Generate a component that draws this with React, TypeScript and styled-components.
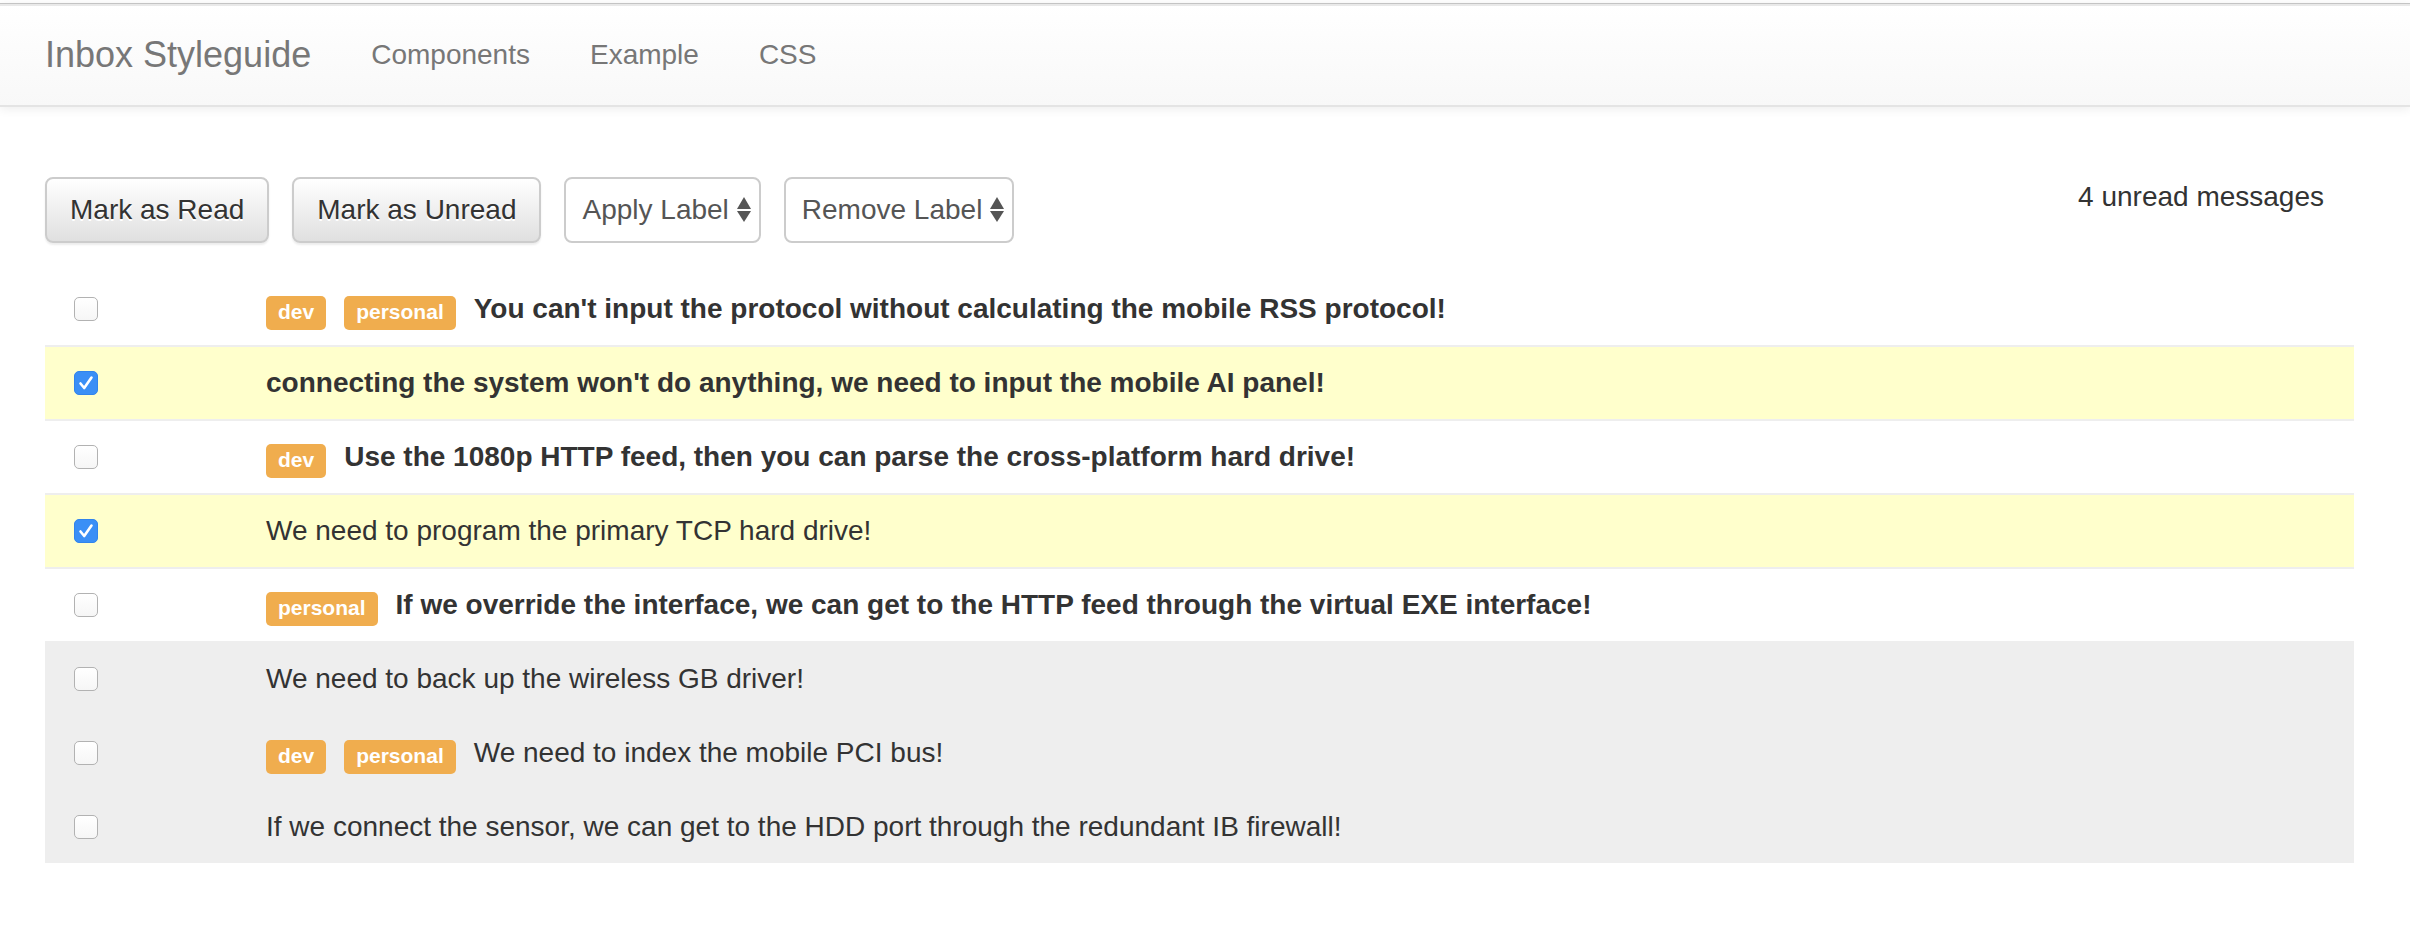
import React from 'react';
import styled, { createGlobalStyle } from 'styled-components';

interface Message {
  id: number;
  text: string;
  labels: string[];
  read: boolean;
  selected: boolean;
}

const messages: Message[] = [
  { id: 1, text: "You can't input the protocol without calculating the mobile RSS protocol!", labels: ['dev', 'personal'], read: false, selected: false },
  { id: 2, text: "connecting the system won't do anything, we need to input the mobile AI panel!", labels: [], read: false, selected: true },
  { id: 3, text: 'Use the 1080p HTTP feed, then you can parse the cross-platform hard drive!', labels: ['dev'], read: false, selected: false },
  { id: 4, text: 'We need to program the primary TCP hard drive!', labels: [], read: true, selected: true },
  { id: 5, text: 'If we override the interface, we can get to the HTTP feed through the virtual EXE interface!', labels: ['personal'], read: false, selected: false },
  { id: 6, text: 'We need to back up the wireless GB driver!', labels: [], read: true, selected: false },
  { id: 7, text: 'We need to index the mobile PCI bus!', labels: ['dev', 'personal'], read: true, selected: false },
  { id: 8, text: 'If we connect the sensor, we can get to the HDD port through the redundant IB firewall!', labels: [], read: true, selected: false },
];

const GlobalStyle = createGlobalStyle`
  html, body {
    margin: 0;
    padding: 0;
    background: #fff;
  }
  body {
    font-family: "Liberation Sans", Helvetica, Arial, sans-serif;
    font-size: 28px;
    line-height: 40px;
    color: #333;
  }
  * {
    box-sizing: border-box;
  }
`;

const App: React.FC = () => {
  const unread = messages.filter((m) => !m.read).length;

  return (
    <StyledPage>
      <GlobalStyle />
      <StyledNavbar>
        <StyledBrand>Inbox Styleguide</StyledBrand>
        <StyledNavLink>Components</StyledNavLink>
        <StyledNavLink>Example</StyledNavLink>
        <StyledNavLink>CSS</StyledNavLink>
      </StyledNavbar>

      <StyledMain>
        <StyledToolbar>
          <StyledButton>Mark as Read</StyledButton>
          <StyledButton>Mark as Unread</StyledButton>
          <LabelSelect text="Apply Label" />
          <LabelSelect text="Remove Label" />
          <StyledUnreadCount>{unread} unread messages</StyledUnreadCount>
        </StyledToolbar>

        <StyledTable>
          {messages.map((message) => (
            <MessageRow key={message.id} message={message} />
          ))}
        </StyledTable>
      </StyledMain>
    </StyledPage>
  );
};

const LabelSelect: React.FC<{ text: string }> = ({ text }) => (
  <StyledSelect>
    <span>{text}</span>
    <svg width="14" height="26" viewBox="0 0 14 26">
      <path d="M7 0 L14 12 L0 12 Z" fill="#555" />
      <path d="M0 14 L14 14 L7 25 Z" fill="#555" />
    </svg>
  </StyledSelect>
);

const MessageRow: React.FC<{ message: Message }> = ({ message }) => (
  <StyledRow $read={message.read} $selected={message.selected}>
    <StyledCheckCell>
      <StyledCheckbox $checked={message.selected}>
        {message.selected && (
          <svg width="24" height="24" viewBox="0 0 24 24">
            <path
              d="M6.5 12.5 L10.2 17 L17.5 6.5"
              fill="none"
              stroke="#fff"
              strokeWidth="2.6"
              strokeLinecap="round"
              strokeLinejoin="round"
            />
          </svg>
        )}
      </StyledCheckbox>
    </StyledCheckCell>
    <StyledMessageCell $read={message.read}>
      {message.labels.map((label) => (
        <StyledLabel key={label}>{label}</StyledLabel>
      ))}
      <span>{message.text}</span>
    </StyledMessageCell>
  </StyledRow>
);

const StyledPage = styled.div`
  padding-top: 3px;
  min-height: 100vh;
`;

const StyledNavbar = styled.nav`
  display: flex;
  align-items: center;
  height: 104px;
  padding-left: 15px;
  background: linear-gradient(to bottom, #ffffff 0%, #f8f8f8 100%);
  border-top: 1px solid #c4c4c4;
  border-bottom: 2px solid #e4e4e4;
  box-shadow: inset 0 2px 0 #e9e9e9, 0 2px 10px rgba(0, 0, 0, 0.075);
`;

const StyledBrand = styled.a`
  padding: 0 30px;
  font-size: 36px;
  line-height: 40px;
  color: #777;
  text-decoration: none;
`;

const StyledNavLink = styled.a`
  padding: 0 30px;
  font-size: 28px;
  line-height: 40px;
  color: #777;
  text-decoration: none;
`;

const StyledMain = styled.main`
  padding: 70px 56px 0 45px;
`;

const StyledToolbar = styled.div`
  display: flex;
  align-items: flex-start;
  gap: 23px;
`;

const StyledButton = styled.button`
  height: 66px;
  padding: 0 23px;
  font-family: inherit;
  font-size: 28px;
  color: #333;
  text-shadow: 0 2px 0 #fff;
  background: linear-gradient(to bottom, #ffffff 0%, #e0e0e0 100%);
  border: 2px solid #cccccc;
  border-radius: 8px;
  box-shadow: inset 0 2px 0 rgba(255, 255, 255, 0.15), 0 2px 2px rgba(0, 0, 0, 0.075);
`;

const StyledSelect = styled.div`
  display: flex;
  align-items: center;
  gap: 8px;
  height: 66px;
  padding: 0 8px 0 16px;
  font-size: 28px;
  color: #555;
  background: #fff;
  border: 2px solid #cccccc;
  border-radius: 8px;
`;

const StyledUnreadCount = styled.div`
  margin-left: auto;
  padding-right: 30px;
  font-size: 28px;
  line-height: 40px;
  color: #333;
`;

const StyledTable = styled.div`
  margin-top: 28px;
  display: flex;
  flex-direction: column;
`;

const StyledRow = styled.div<{ $read: boolean; $selected: boolean }>`
  display: grid;
  grid-template-columns: 205px 1fr;
  height: 74px;
  border-top: 2px solid #eeeeee;
  background: ${(props) => (props.$selected ? '#ffffcc' : props.$read ? '#eeeeee' : '#ffffff')};
  &:first-child {
    border-top-color: transparent;
  }
`;

const StyledCheckCell = styled.div`
  display: flex;
  align-items: center;
  padding-left: 29px;
`;

const StyledCheckbox = styled.span<{ $checked: boolean }>`
  display: flex;
  width: 24px;
  height: 24px;
  border-radius: 5px;
  background: ${(props) => (props.$checked ? '#3a8ff6' : 'linear-gradient(to bottom, #ffffff, #f6f6f6)')};
  border: ${(props) => (props.$checked ? '1px solid #3184ec' : '1.5px solid #b2b2b2')};
  & svg {
    margin: -1px;
  }
`;

const StyledMessageCell = styled.div<{ $read: boolean }>`
  display: flex;
  align-items: center;
  padding: 0 16px;
  font-size: 28px;
  font-weight: ${(props) => (props.$read ? 400 : 700)};
  color: #333;
  white-space: nowrap;
`;

const StyledLabel = styled.span`
  display: inline-block;
  margin: 7px 18px 0 0;
  padding: 5px 12px 7px;
  font-size: 21px;
  line-height: 22px;
  font-weight: 700;
  color: #fff;
  background: #f0ad4e;
  border-radius: 5px;
`;

export default App;
